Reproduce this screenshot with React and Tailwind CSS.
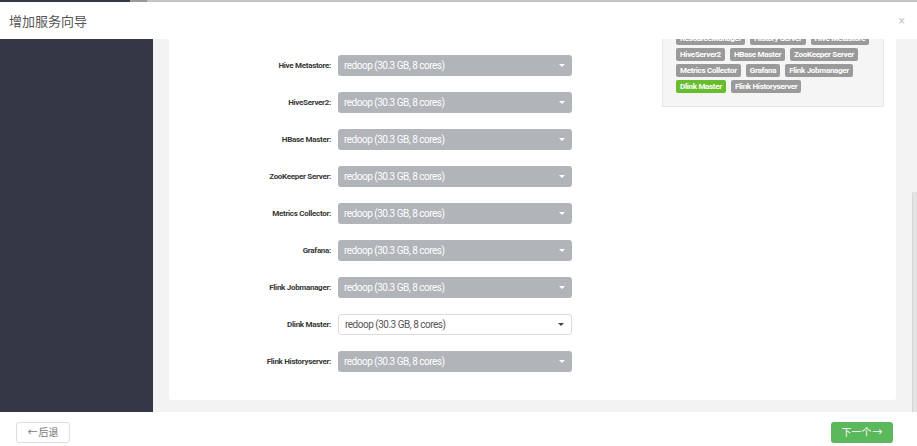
const hiddenRows = [
  { label: "SNameNode:", disabled: true },
  { label: "ResourceManager:", disabled: true },
  { label: "History Server:", disabled: false },
];

const rows = [
  ...hiddenRows,
  { label: "Hive Metastore:", disabled: true },
  { label: "HiveServer2:", disabled: true },
  { label: "HBase Master:", disabled: true },
  { label: "ZooKeeper Server:", disabled: true },
  { label: "Metrics Collector:", disabled: true },
  { label: "Grafana:", disabled: true },
  { label: "Flink Jobmanager:", disabled: true },
  { label: "Dlink Master:", disabled: false },
  { label: "Flink Historyserver:", disabled: true },
];

const tagRows = [
  ["NameNode", "SNameNode", "Timeline Service"],
  ["App Timeline Server", "Kafka Broker"],
  ["ResourceManager", "History Server", "Hive Metastore"],
  ["HiveServer2", "HBase Master", "ZooKeeper Server"],
  ["Metrics Collector", "Grafana", "Flink Jobmanager"],
  ["Dlink Master", "Flink Historyserver"],
];

function HostSelect({ disabled }) {
  return (
    <div
      className={`w-[234px] h-[21px] rounded-[3px] flex items-center justify-between pl-[6px] pr-[7px] text-[10px] tracking-[-0.5px] ${
        disabled
          ? "bg-[#b1b4b9] text-white"
          : "bg-white border border-[#dcdcdc] text-[#555]"
      }`}
    >
      <span>redoop (30.3 GB, 8 cores)</span>
      <span
        className={`w-0 h-0 border-l-[3px] border-r-[3px] border-t-[3px] border-l-transparent border-r-transparent ${
          disabled ? "border-t-white" : "border-t-[#444]"
        }`}
      />
    </div>
  );
}

export default function App() {
  return (
    <div className="w-[917px] h-[446px] bg-white overflow-hidden flex flex-col font-['Roboto','Noto_Sans_CJK_SC',sans-serif]">
      {/* page behind the modal */}
      <div className="flex h-[2px]">
        <div className="w-[130px] bg-[#343746]" />
        <div className="w-[17px] bg-[#999]" />
        <div className="flex-1 bg-[#c4c4c4]" />
      </div>

      {/* Header */}
      <header className="h-[37px] shrink-0 flex items-center justify-between pl-[9px] pr-[12px]">
        <h1 className="text-[13px] text-[#555] font-['Noto_Sans_CJK_SC',sans-serif]">
          增加服务向导
        </h1>
        <span className="text-[12px] leading-none text-[#c8c8c8]">×</span>
      </header>

      {/* Body */}
      <div className="flex h-[373px] shrink-0">
        <aside className="w-[153px] bg-[#343746]" />
        <main className="relative flex-1 bg-[#f3f3f3] overflow-hidden pl-4 pr-[21px]">
          <div className="-mt-[111px] bg-white rounded-[3px] flex justify-between pt-4 pb-[28px] pr-[12px]">
            {/* Assign form */}
            <div className="flex flex-col gap-4">
              {rows.map((r) => (
                <div key={r.label} className="flex items-center gap-[7px]">
                  <label className="w-[162px] text-right text-[8px] tracking-[-0.3px] font-bold text-[#383838]">
                    {r.label}
                  </label>
                  <HostSelect disabled={r.disabled} />
                </div>
              ))}
            </div>

            {/* Host summary */}
            <div className="self-start mt-[43px] w-[222px] bg-[#f5f5f5] border border-[#e6e6e6] pl-[13px] pr-2 pt-3 pb-[13px] flex flex-col gap-[3px]">
              {tagRows.map((tr, i) => (
                <div key={i} className="flex gap-[5px]">
                  {tr.map((t) => (
                    <span
                      key={t}
                      className={`h-[13px] px-[4px] rounded-[2px] flex items-center text-[8px] tracking-[-0.3px] font-bold text-white whitespace-nowrap ${
                        t === "Dlink Master" ? "bg-[#68bd2f]" : "bg-[#9a9a9a]"
                      }`}
                    >
                      {t}
                    </span>
                  ))}
                </div>
              ))}
            </div>
          </div>

          {/* scrollbar thumb */}
          <div className="absolute right-0 top-[153px] w-[5px] h-[220px] bg-[#e4e4e4] border-l border-[#d6d6d6] rounded-tl-[2px]" />
        </main>
      </div>

      {/* Footer */}
      <footer className="flex-1 flex items-start justify-between pt-[10px] pl-4 pr-6">
        <button className="w-[54px] h-[21px] rounded-[3px] border border-[#dedede] bg-white text-[10px] text-[#777] flex items-center justify-center gap-[1px]">
          <span>←</span>
          <span>后退</span>
        </button>
        <button className="w-[62px] h-[21px] rounded-[3px] bg-[#5cb85c] text-[10px] text-white flex items-center justify-center gap-[1px]">
          <span>下一个</span>
          <span>→</span>
        </button>
      </footer>
    </div>
  );
}
